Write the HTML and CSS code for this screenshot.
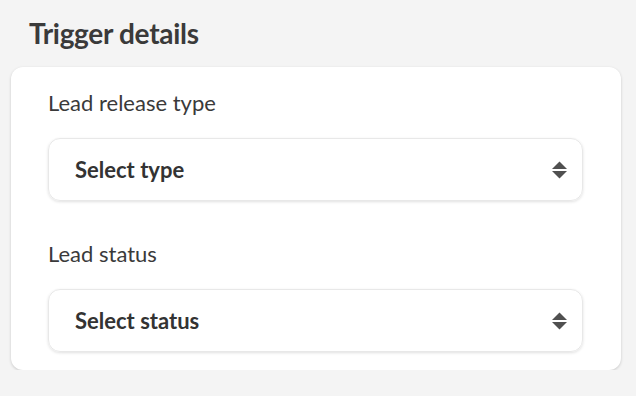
FILE: index.html
```html
<!DOCTYPE html>
<html lang="en">
<head>
  <meta charset="UTF-8">
  <title>Trigger details</title>
  <link rel="stylesheet" href="styles.css">
</head>
<body>
  <h2 class="title">Trigger details</h2>
  <div class="card">
    <div class="field">
      <label class="label">Lead release type</label>
      <div class="select">
        <span>Select type</span>
        <svg class="arrows" width="15" height="18" viewBox="0 0 15 18">
          <path d="M7.5 0.5 L15 8 L0 8 Z" fill="#505050"/>
          <path d="M0 10 L15 10 L7.5 17.5 Z" fill="#505050"/>
        </svg>
      </div>
    </div>
    <div class="field">
      <label class="label">Lead status</label>
      <div class="select">
        <span>Select status</span>
        <svg class="arrows" width="15" height="18" viewBox="0 0 15 18">
          <path d="M7.5 0.5 L15 8 L0 8 Z" fill="#505050"/>
          <path d="M0 10 L15 10 L7.5 17.5 Z" fill="#505050"/>
        </svg>
      </div>
    </div>
  </div>
</body>
</html>
```

FILE: styles.css
```css
body {
  margin: 0;
  background: #f4f4f4;
  font-family: Lato, "Open Sans", sans-serif;
  color: #333;
  padding: 0 15px 0 11px;
}
.title {
  margin: 0;
  padding: 16px 0 0 18px;
  height: 67px;
  box-sizing: border-box;
  font-size: 28px;
  line-height: 34px;
  font-weight: 700;
  color: #3a3a3a;
  letter-spacing: -0.3px;
}
.card {
  background: #fff;
  border-radius: 12px;
  box-shadow: 0 1px 3px rgba(0,0,0,0.18);
  padding: 23px 38px 18px 37px;
  display: flex;
  flex-direction: column;
  gap: 40px;
}
.label {
  display: block;
  font-size: 22px;
  color: #3a3a3a;
  margin-bottom: 22px;
  line-height: 26px;
}
.select {
  height: 63px;
  box-sizing: border-box;
  border: 1px solid #e8e8e8;
  border-radius: 12px;
  box-shadow: 0 1px 3px rgba(0,0,0,0.12);
  display: flex;
  align-items: center;
  justify-content: space-between;
  padding: 0 15px 0 26px;
  font-size: 22px;
  font-weight: 700;
  color: #333;
}
.arrows { display: block; }
```
